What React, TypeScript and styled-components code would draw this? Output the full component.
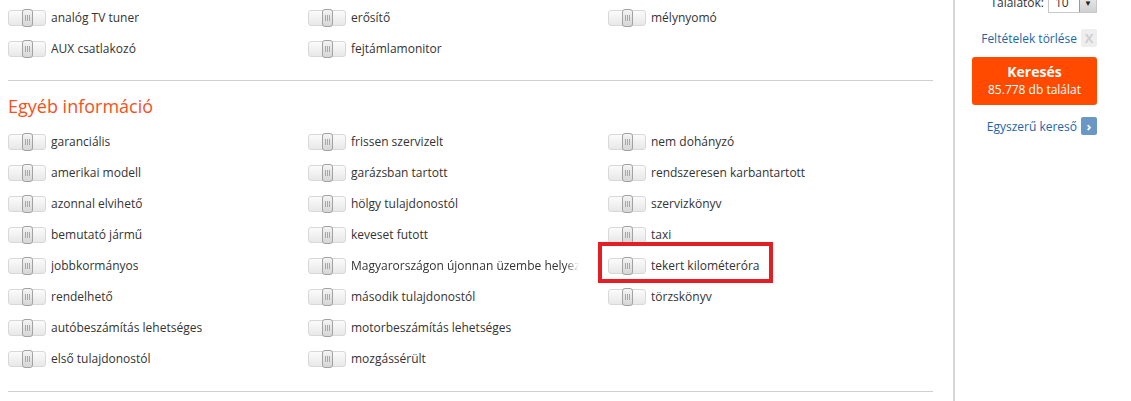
import React from "react";
import styled, { createGlobalStyle } from "styled-components";

const Global = createGlobalStyle`
  html, body { margin: 0; padding: 0; background: #fff; }
  body { font-family: "Open Sans", "Noto Sans", Arial, sans-serif; font-size: 12px; color: #333; overflow: hidden; }
  * { box-sizing: border-box; }
`;

const Page = styled.div`
  display: flex;
  width: 1131px;
  height: 401px;
  overflow: hidden;
`;

const Main = styled.div`
  width: 955px;
  flex: none;
  border-right: 2px solid #d6d6d6;
  padding: 2px 20px 0 8px;
  height: 420px;
`;

const Grid = styled.div`
  display: grid;
  grid-template-columns: 300px 300px 300px;
  grid-auto-rows: 31px;
`;

const Cell = styled.div`
  position: relative;
  display: flex;
  align-items: center;
  gap: 5px;
  min-width: 0;
`;

const Track = styled.span`
  flex: none;
  width: 38px;
  height: 16px;
  border: 1px solid #d8d8d8;
  border-radius: 3px;
  background: linear-gradient(#fbfbfb, #e8e8e8);
  display: flex;
  align-items: center;
  justify-content: center;
`;

const Knob = styled.span`
  width: 11px;
  height: 18px;
  border: 1px solid #a2a2a2;
  border-radius: 3px;
  background: linear-gradient(#f4f4f4, #d6d6d6);
  display: flex;
  align-items: center;
  justify-content: center;
  gap: 1px;
`;

const Line = styled.span`
  width: 1px;
  height: 6px;
  background: #a8a8a8;
`;

const Label = styled.span<{ $clip?: boolean }>`
  white-space: nowrap;
  overflow: hidden;
  max-width: 228px;
  line-height: 18px;
  ${(p) =>
    p.$clip
      ? `-webkit-mask-image: linear-gradient(to right, #000 calc(100% - 14px), transparent);
         mask-image: linear-gradient(to right, #000 calc(100% - 14px), transparent);`
      : ""}
`;

const Divider = styled.div<{ $top: number }>`
  height: 0;
  border-top: 1px solid #d0d0d0;
  margin-top: ${(p) => p.$top}px;
`;

const Heading = styled.h2`
  margin: 11px 0 6px;
  font-size: 18px;
  font-weight: 400;
  line-height: 28px;
  color: #f4511e;
`;

const Highlight = styled.span`
  position: absolute;
  left: -10px;
  top: -8px;
  width: 175px;
  height: 41px;
  border: 4px solid #e31e24;
  pointer-events: none;
`;

const Side = styled.div`
  flex: 1;
  display: flex;
  flex-direction: column;
  align-items: flex-end;
  padding: 0 34px 0 0;
  margin-top: -8px;
`;

const CountRow = styled.div`
  display: flex;
  align-items: center;
  gap: 4px;
  height: 21px;
`;

const Select = styled.span`
  width: 49px;
  height: 21px;
  border: 1px solid #c8c8c8;
  background: #fff;
  display: flex;
  align-items: center;
  justify-content: space-between;
  padding-left: 6px;
`;

const SelectBtn = styled.span`
  width: 17px;
  height: 19px;
  background: linear-gradient(#f0f0f0, #d0d0d0);
  border-left: 1px solid #999;
  display: flex;
  align-items: center;
  justify-content: center;
  font-size: 8px;
  color: #222;
`;

const LinkRow = styled.div<{ $mt: number }>`
  display: flex;
  align-items: center;
  gap: 4px;
  margin-top: ${(p) => p.$mt}px;
  color: #1d66a8;
`;

const SmallBox = styled.span<{ $blue?: boolean }>`
  width: 16px;
  height: 18px;
  border-radius: 2px;
  display: flex;
  align-items: center;
  justify-content: center;
  font-weight: 700;
  font-size: 13px;
  background: ${(p) => (p.$blue ? "#6b97c5" : "#eeeeee")};
  color: ${(p) => (p.$blue ? "#fff" : "#cfcfcf")};
`;

const SearchBtn = styled.div`
  margin-top: 10px;
  width: 125px;
  height: 48px;
  border-radius: 3px;
  background: #ff4a00;
  color: #fff;
  display: flex;
  flex-direction: column;
  align-items: center;
  justify-content: center;
`;

const BtnTitle = styled.span`
  font-weight: 700;
  font-size: 14px;
  line-height: 18px;
`;

const BtnSub = styled.span`
  font-size: 12px;
  line-height: 18px;
`;

const Toggle = () => (
  <Track>
    <Knob>
      <Line />
      <Line />
      <Line />
    </Knob>
  </Track>
);

type Item = { t: string; clip?: boolean; hl?: boolean } | null;

const top: Item[] = [
  { t: "analóg TV tuner" },
  { t: "erősítő" },
  { t: "mélynyomó" },
  { t: "AUX csatlakozó" },
  { t: "fejtámlamonitor" },
  null,
];

const other: Item[] = [
  { t: "garanciális" },
  { t: "frissen szervizelt" },
  { t: "nem dohányzó" },
  { t: "amerikai modell" },
  { t: "garázsban tartott" },
  { t: "rendszeresen karbantartott" },
  { t: "azonnal elvihető" },
  { t: "hölgy tulajdonostól" },
  { t: "szervizkönyv" },
  { t: "bemutató jármű" },
  { t: "keveset futott" },
  { t: "taxi" },
  { t: "jobbkormányos" },
  { t: "Magyarországon újonnan üzembe helyezett", clip: true },
  { t: "tekert kilométeróra", hl: true },
  { t: "rendelhető" },
  { t: "második tulajdonostól" },
  { t: "törzskönyv" },
  { t: "autóbeszámítás lehetséges" },
  { t: "motorbeszámítás lehetséges" },
  null,
  { t: "első tulajdonostól" },
  { t: "mozgássérült" },
  null,
];

const renderItems = (items: Item[]) =>
  items.map((it, i) =>
    it ? (
      <Cell key={i}>
        <Toggle />
        <Label $clip={it.clip}>{it.t}</Label>
        {it.hl && <Highlight />}
      </Cell>
    ) : (
      <Cell key={i} />
    )
  );

export default function App() {
  return (
    <>
      <Global />
      <Page>
        <Main>
          <Grid>{renderItems(top)}</Grid>
          <Divider $top={16} />
          <Heading>Egyéb információ</Heading>
          <Grid>{renderItems(other)}</Grid>
          <Divider $top={17} />
        </Main>
        <Side>
          <CountRow>
            <span>Találatok:</span>
            <Select>
              <span>10</span>
              <SelectBtn>▼</SelectBtn>
            </Select>
          </CountRow>
          <LinkRow $mt={16}>
            <span>Feltételek törlése</span>
            <SmallBox>X</SmallBox>
          </LinkRow>
          <SearchBtn>
            <BtnTitle>Keresés</BtnTitle>
            <BtnSub>85.778 db találat</BtnSub>
          </SearchBtn>
          <LinkRow $mt={12}>
            <span>Egyszerű kereső</span>
            <SmallBox $blue>›</SmallBox>
          </LinkRow>
        </Side>
      </Page>
    </>
  );
}
